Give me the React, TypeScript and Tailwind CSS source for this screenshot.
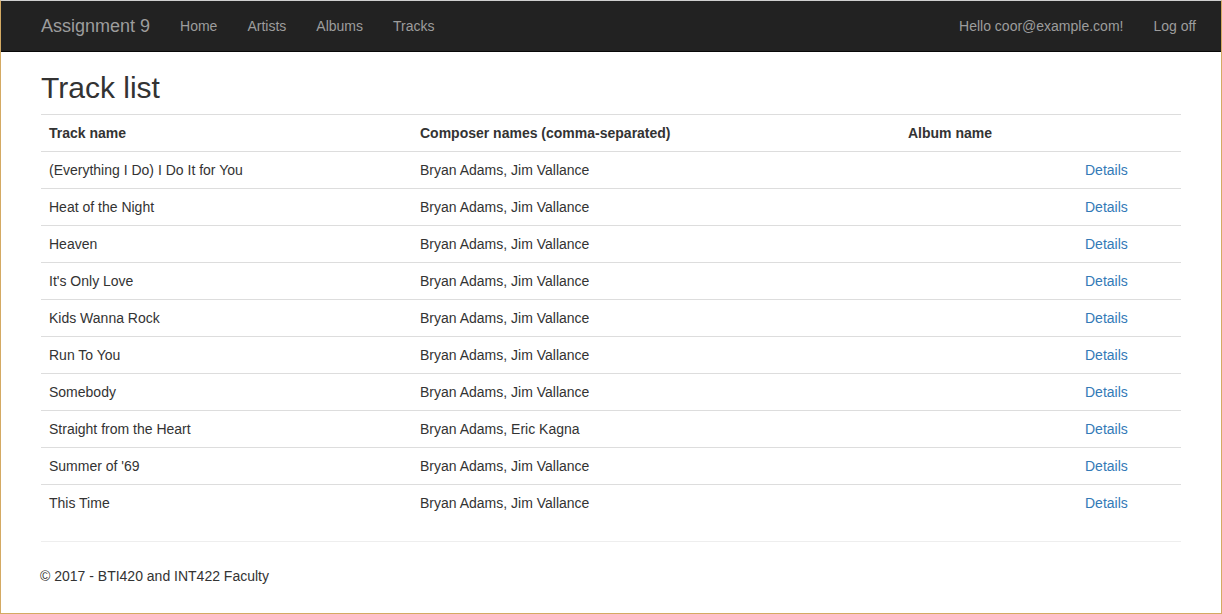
const tracks = [
  { name: "(Everything I Do) I Do It for You", composers: "Bryan Adams, Jim Vallance" },
  { name: "Heat of the Night", composers: "Bryan Adams, Jim Vallance" },
  { name: "Heaven", composers: "Bryan Adams, Jim Vallance" },
  { name: "It's Only Love", composers: "Bryan Adams, Jim Vallance" },
  { name: "Kids Wanna Rock", composers: "Bryan Adams, Jim Vallance" },
  { name: "Run To You", composers: "Bryan Adams, Jim Vallance" },
  { name: "Somebody", composers: "Bryan Adams, Jim Vallance" },
  { name: "Straight from the Heart", composers: "Bryan Adams, Eric Kagna" },
  { name: "Summer of '69", composers: "Bryan Adams, Jim Vallance" },
  { name: "This Time", composers: "Bryan Adams, Jim Vallance" },
];

const navLinks = ["Home", "Artists", "Albums", "Tracks"];

const App = () => {
  return (
    <div className="box-border h-[614px] w-[1222px] overflow-hidden border-x border-b border-t border-x-[#d4aa63] border-b-[#d4aa63] border-t-[#cfcfcf] bg-white font-['Liberation_Sans',Arial,sans-serif] text-[14px] leading-[20px] text-[#333]">
      <nav className="h-[51px] border-b border-[#080808] bg-[#222]">
        <div className="mx-auto flex h-[50px] w-[1170px] items-center px-[15px]">
          <a className="-ml-[15px] px-[15px] text-[18px] leading-[20px] text-[#9d9d9d]">
            Assignment 9
          </a>
          <ul className="flex">
            {navLinks.map((link) => (
              <li key={link}>
                <a className="block px-[15px] py-[15px] text-[#9d9d9d]">{link}</a>
              </li>
            ))}
          </ul>
          <ul className="-mr-[30px] ml-auto flex">
            <li>
              <a className="block px-[15px] py-[15px] text-[#9d9d9d]">
                Hello coor@example.com!
              </a>
            </li>
            <li>
              <a className="block px-[15px] py-[15px] text-[#9d9d9d]">Log off</a>
            </li>
          </ul>
        </div>
      </nav>

      <main className="mx-auto -mt-px flex w-[1170px] flex-col px-[15px]">
        <h2 className="mb-[10px] mt-5 text-[30px] font-medium leading-[33px]">Track list</h2>

        <table className="w-full table-fixed border-collapse">
          <colgroup>
            <col className="w-[371px]" />
            <col className="w-[488px]" />
            <col className="w-[177px]" />
            <col />
          </colgroup>
          <tbody>
            <tr>
              <th className="border-t border-[#ddd] p-2 text-left align-bottom font-bold">
                Track name
              </th>
              <th className="border-t border-[#ddd] p-2 text-left align-bottom font-bold">
                Composer names (comma-separated)
              </th>
              <th className="border-t border-[#ddd] p-2 text-left align-bottom font-bold">
                Album name
              </th>
              <th className="border-t border-[#ddd] p-2"></th>
            </tr>
            {tracks.map((track) => (
              <tr key={track.name}>
                <td className="border-t border-[#ddd] p-2">{track.name}</td>
                <td className="border-t border-[#ddd] p-2">{track.composers}</td>
                <td className="border-t border-[#ddd] p-2"></td>
                <td className="border-t border-[#ddd] p-2">
                  <a className="text-[#337ab7]">Details</a>
                </td>
              </tr>
            ))}
          </tbody>
        </table>

        <hr className="mt-5 border-0 border-t border-[#eee]" />

        <footer className="mt-6">
          <p className="-ml-px">© 2017 - BTI420 and INT422 Faculty</p>
        </footer>
      </main>
    </div>
  );
};

export default App;
